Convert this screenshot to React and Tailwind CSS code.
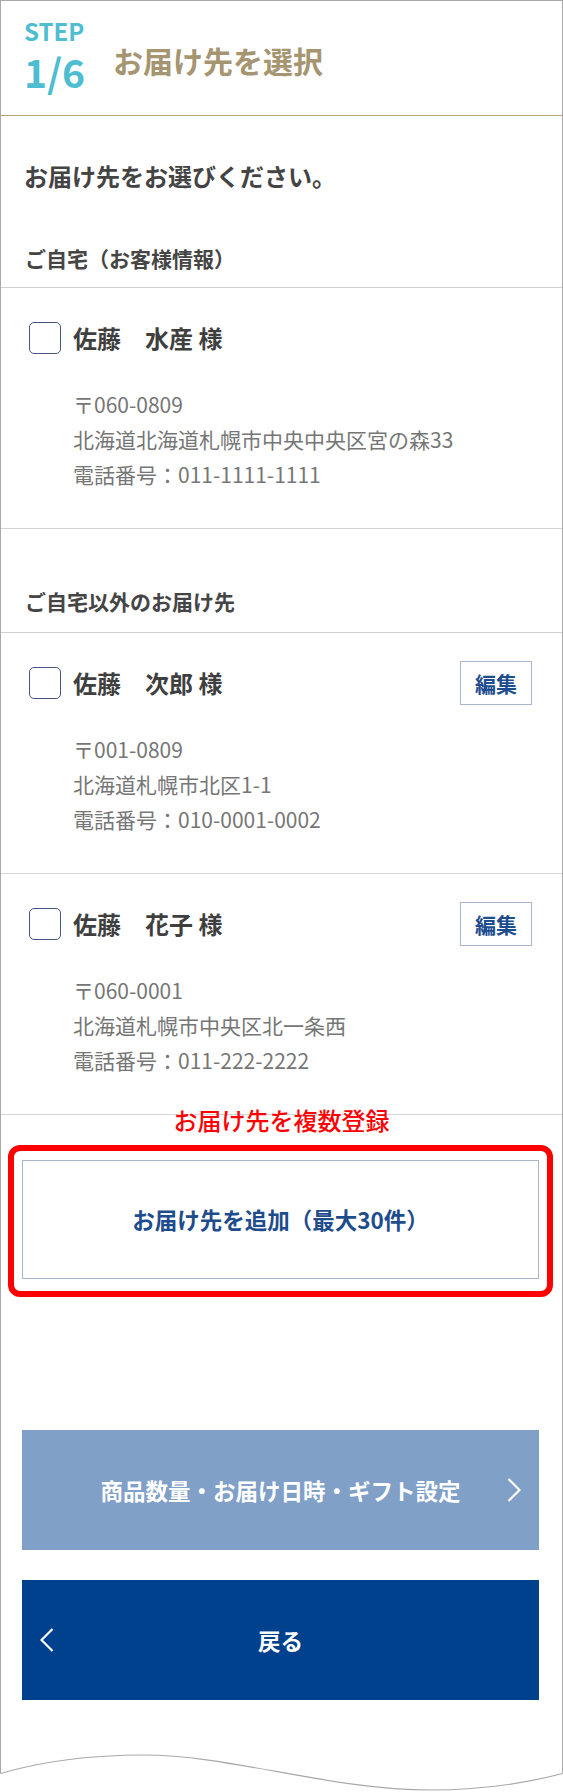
const addresses = [
  {
    name: '佐藤\u3000水産 様',
    lines: ['〒060-0809', '北海道北海道札幌市中央中央区宮の森33', '電話番号：011-1111-1111'],
    editable: false,
  },
  {
    name: '佐藤\u3000次郎 様',
    lines: ['〒001-0809', '北海道札幌市北区1-1', '電話番号：010-0001-0002'],
    editable: true,
  },
  {
    name: '佐藤\u3000花子 様',
    lines: ['〒060-0001', '北海道札幌市中央区北一条西', '電話番号：011-222-2222'],
    editable: true,
  },
];

// thin chevron used on the footer buttons
function Chevron({ dir = 'right', className = '' }) {
  const points = dir === 'right' ? '1.5,1 12.5,12 1.5,23' : '12.5,1 1.5,12 12.5,23';
  return (
    <svg viewBox="0 0 14 24" className={`h-[24px] w-[14px] ${className}`} fill="none" aria-hidden="true">
      <polyline points={points} stroke="currentColor" strokeWidth="2.2" strokeLinejoin="miter" />
    </svg>
  );
}

function AddressCard({ name, lines, editable }) {
  return (
    <div className="border-b border-[#d4d4d4] pl-[28px] pr-[30px] pt-[28px] pb-[36px]">
      <div className="flex h-[44px] items-center justify-between">
        <label className="flex items-center gap-[12px]">
          <span className="box-border block h-[32px] w-[32px] rounded-[5px] border-[1.5px] border-[#46587f] bg-white" />
          <span className="text-[24px] font-bold leading-none text-[#3f3f3f]">{name}</span>
        </label>
        {editable && (
          <button className="box-border h-[44px] w-[72px] border-[1.5px] border-[#aab6cf] bg-white text-[21px] font-bold leading-none text-[#1e4d8f]">
            編集
          </button>
        )}
      </div>
      <div className="pl-[44px] pt-[27px] text-[21px] leading-[35px] text-[#767676]">
        {lines.map((line) => (
          <p key={line}>{line}</p>
        ))}
      </div>
    </div>
  );
}

function SectionLabel({ children, className = '' }) {
  return (
    <h2
      className={`border-b border-[#d0d0d0] px-[24px] text-[21px] font-bold leading-none text-[#454545] ${className}`}
    >
      {children}
    </h2>
  );
}

export default function App() {
  return (
    <div className="w-[563px] bg-white font-['Noto_Sans_CJK_JP','Noto_Sans',sans-serif]">
      <div className="border-x border-t border-[#a8a8a8] pb-[40px]">
        <header className="flex h-[115px] border-b border-[#b5a478] pl-[23px]">
          <div className="w-[89px] pt-[18px] text-[#4dbdd1]">
            <p className="text-[24px] font-bold leading-none">STEP</p>
            <p className="mt-[9px] text-[39px] font-bold leading-none">1/6</p>
          </div>
          <h1 className="mt-[3px] self-center text-[30px] font-bold leading-none text-[#a59570]">
            お届け先を選択
          </h1>
        </header>

        <p className="px-[23px] pt-[48px] text-[24px] font-bold leading-none text-[#444]">
          お届け先をお選びください。
        </p>

        <SectionLabel className="pt-[60px] pb-[18px]">ご自宅（お客様情報）</SectionLabel>
        <AddressCard {...addresses[0]} />

        <SectionLabel className="pt-[62px] pb-[20px]">ご自宅以外のお届け先</SectionLabel>
        <AddressCard {...addresses[1]} />
        <AddressCard {...addresses[2]} />

        <p className="mt-[-7px] text-center text-[24px] font-medium leading-none text-[#ff0000]">
          お届け先を複数登録
        </p>
        <div className="ml-[7px] mr-[9px] mt-[13px] rounded-[12px] border-[6px] border-[#ff0000] px-[8px] pt-[9px] pb-[12px]">
          <button className="box-border flex h-[119px] w-full items-center justify-center border-[1.5px] border-[#a9b5cf] bg-white text-[22.5px] font-bold leading-none text-[#1f4c8c]">
            お届け先を追加（最大30件）
          </button>
        </div>

        <div className="ml-[21px] mr-[23px] mt-[133px] flex flex-col gap-[30px]">
          <button className="relative flex h-[120px] items-center justify-center bg-[#80a0c8] text-[22.5px] font-bold leading-none text-white">
            商品数量・お届け日時・ギフト設定
            <Chevron dir="right" className="absolute right-[18px] top-1/2 -translate-y-1/2" />
          </button>
          <button className="relative flex h-[120px] items-center justify-center bg-[#00418d] text-[22.5px] font-bold leading-none text-white">
            <Chevron dir="left" className="absolute left-[18px] top-1/2 -translate-y-1/2" />
            戻る
          </button>
        </div>
      </div>

      <svg width="563" height="52" viewBox="0 0 563 52" className="block" fill="none">
        <path d="M0.5 0 V33.5 M562.5 0 V33.5" stroke="#a8a8a8" strokeWidth="1" />
        <path
          d="M0.5 33.5 C40 22, 90 15, 144 15 C230 15, 330 50, 431 50 C490 50, 530 42, 562.5 33.5"
          stroke="#a8a8a8"
          strokeWidth="1.2"
        />
      </svg>
    </div>
  );
}
